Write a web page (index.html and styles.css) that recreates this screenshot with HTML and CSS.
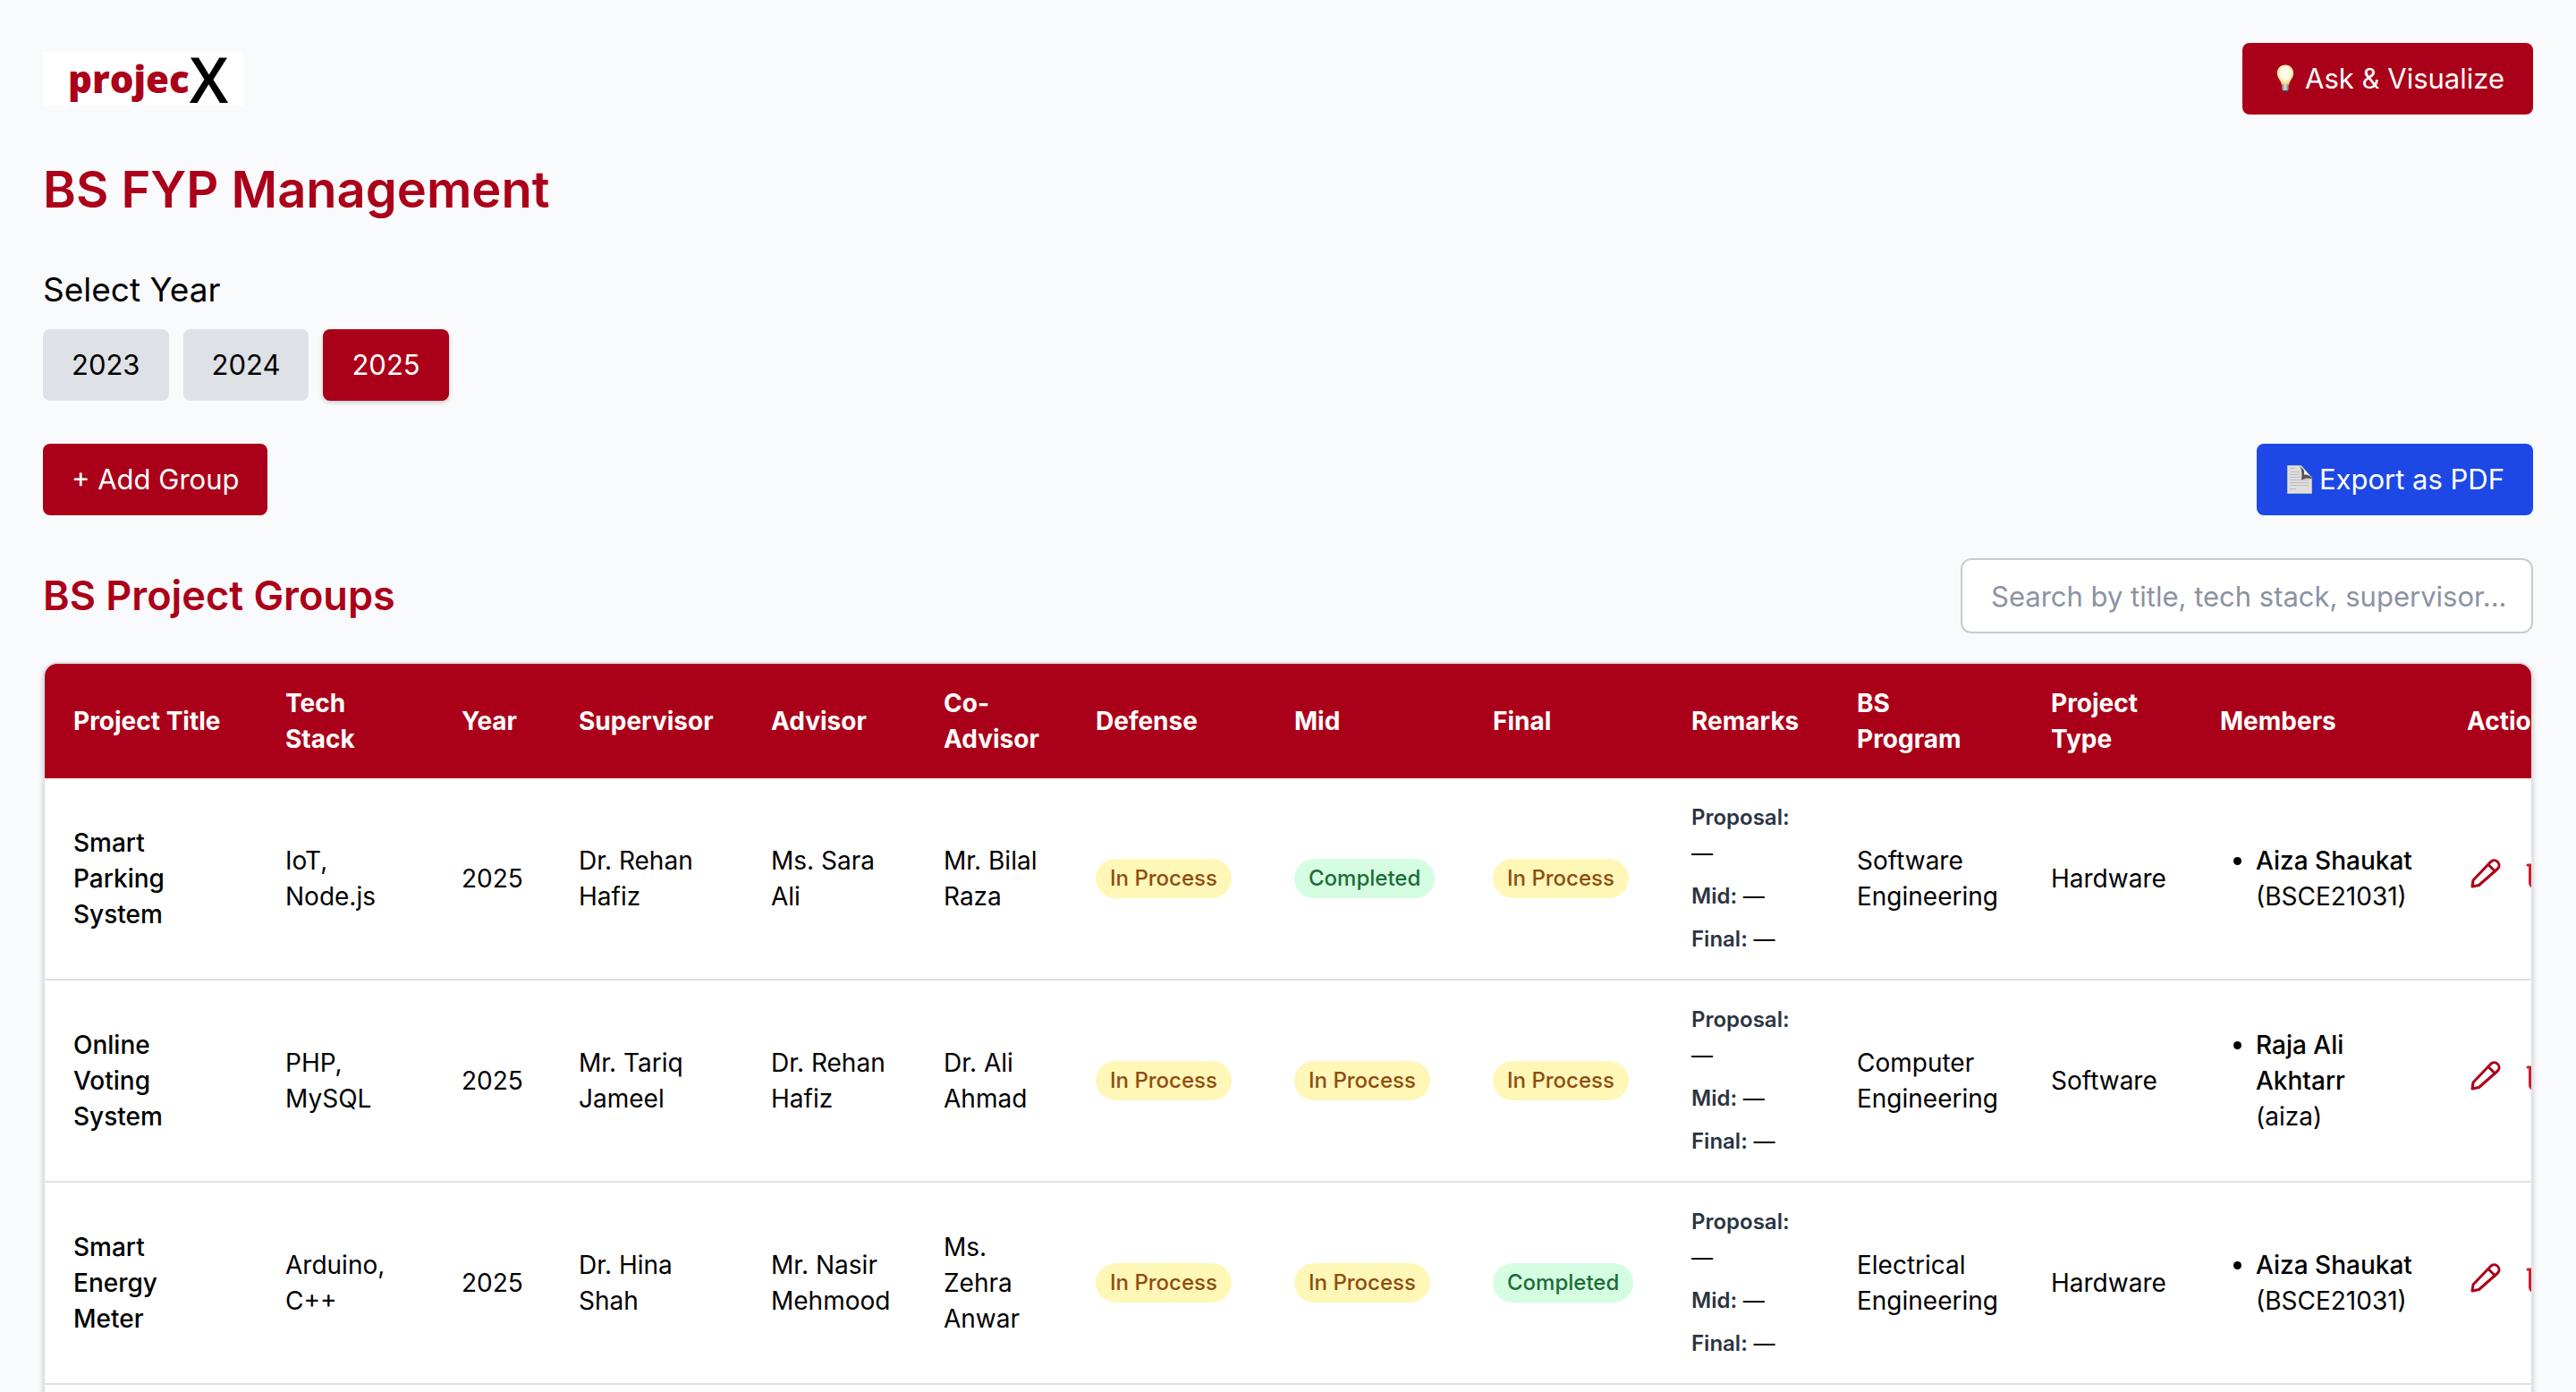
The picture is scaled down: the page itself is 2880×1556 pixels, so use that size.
FILE: index.html
```html
<!DOCTYPE html>
<html lang="en">
<head>
<meta charset="utf-8">
<title>BS FYP Management</title>
<link rel="stylesheet" href="styles.css">
</head>
<body>
<svg class="sprite" aria-hidden="true">
  <symbol id="pencil" viewBox="0 0 34 34"><path d="M2 32l1-7L22.500 4.500a5.300 5.300 0 0 1 8 7.500L9.500 30.500z"/><path d="M20 7.500l7.500 7.500"/></symbol>
  <symbol id="trash" viewBox="0 0 34 34"><path d="M2 8h30M4.500 8v20a4 4 0 0 0 4 4h17a4 4 0 0 0 4-4V8M11 8V5a3 3 0 0 1 3-3h6a3 3 0 0 1 3 3v3"/></symbol>
</svg>
<main class="page">
  <header class="bar">
    <div class="logo"><span class="logo-word">projec</span><span class="logo-x">X</span></div>
    <button type="button" class="btn btn-red">
      <svg class="bulb" viewBox="0 0 20 32" aria-hidden="true">
        <defs><radialGradient id="glow" cx="50%" cy="42%" r="55%"><stop offset="0" stop-color="#fffef6"/><stop offset=".6" stop-color="#fdf6d8"/><stop offset="1" stop-color="#f0cf7c"/></radialGradient>
        <linearGradient id="cap" x1="0" x2="1"><stop offset="0" stop-color="#777"/><stop offset=".5" stop-color="#ddd"/><stop offset="1" stop-color="#666"/></linearGradient></defs>
        <path fill="url(#glow)" d="M10 0.500C4.500.500.800 4.500.800 9.500c0 5.500 4.200 8 5.200 13.500h8c1-5.500 5.200-8 5.200-13.500C19.200 4.500 15.500.500 10 .500z"/>
        <path fill="url(#cap)" d="M6 22.500h8v5l-2 2.500H8l-2-2.500z"/><path fill="#444" d="M8 29h4l-1 2.500H9z"/>
      </svg>Ask &amp; Visualize</button>
  </header>

  <h1>BS FYP Management</h1>

  <section class="years">
    <h2 class="label">Select Year</h2>
    <div class="year-list">
      <button type="button" class="btn btn-gray">2023</button>
      <button type="button" class="btn btn-gray">2024</button>
      <button type="button" class="btn btn-red active">2025</button>
    </div>
  </section>

  <div class="bar">
    <button type="button" class="btn btn-red">+ Add Group</button>
    <button type="button" class="btn btn-blue">
      <svg class="doc" viewBox="0 0 28 32" aria-hidden="true">
        <path fill="#dedede" stroke="#bbb" d="M.500.500h15L27.500 14v17.500H.500z"/>
        <path stroke="#bcbcbc" stroke-width="1" d="M3 3.500h6M3 7.500h11M3 10.500h11M3 13.500h12M3 16.500h21M3 19.500h21M3 22.500h21M3 26.500h7"/>
        <path fill="#555" d="M13.500.500c3 3.500 3.500 9 2.500 16 4-2 8-2.500 11.500-1V14z"/>
        <path fill="#f6f6f6" d="M15.500.500c3 2 4 5.500 3.500 10 3-.500 6 .500 8.500 3.500z"/>
      </svg>Export as PDF</button>
  </div>

  <div class="bar list-head">
    <h2 class="title">BS Project Groups</h2>
    <input class="search" type="text" aria-label="Search groups" placeholder="Search by title, tech stack, supervisor...">
  </div>

  <div class="table-wrap">
    <table>
      <colgroup><col class="w-title"><col class="w-stack"><col class="w-year"><col class="w-super"><col class="w-advisor"><col class="w-co"><col class="w-stage"><col class="w-stage"><col class="w-stage"><col class="w-remarks"><col class="w-program"><col class="w-type"><col class="w-members"><col class="w-actions"></colgroup>
      <thead>
        <tr><th>Project Title</th><th>Tech<br>Stack</th><th>Year</th><th>Supervisor</th><th>Advisor</th><th>Co-<br>Advisor</th><th>Defense</th><th>Mid</th><th>Final</th><th>Remarks</th><th>BS<br>Program</th><th>Project<br>Type</th><th>Members</th><th>Actions</th></tr>
      </thead>
      <tbody>
        <tr>
          <td class="name">Smart<br>Parking<br>System</td><td>IoT,<br>Node.js</td><td>2025</td><td>Dr. Rehan<br>Hafiz</td><td>Ms. Sara<br>Ali</td><td>Mr. Bilal<br>Raza</td>
          <td><span class="tag wait">In Process</span></td><td><span class="tag done">Completed</span></td><td><span class="tag wait">In Process</span></td>
          <td><div class="remarks"><p><b>Proposal:</b><br>—</p><p><b>Mid:</b> —</p><p><b>Final:</b> —</p></div></td>
          <td>Software<br>Engineering</td><td>Hardware</td>
          <td><ul><li><b>Aiza Shaukat</b><br>(BSCE21031)</li></ul></td>
          <td><div class="actions"><button type="button" aria-label="Edit"><svg><use href="#pencil"/></svg></button><button type="button" class="delete" aria-label="Delete"><svg><use href="#trash"/></svg></button></div></td>
        </tr>
        <tr>
          <td class="name">Online<br>Voting<br>System</td><td>PHP,<br>MySQL</td><td>2025</td><td>Mr. Tariq<br>Jameel</td><td>Dr. Rehan<br>Hafiz</td><td>Dr. Ali<br>Ahmad</td>
          <td><span class="tag wait">In Process</span></td><td><span class="tag wait">In Process</span></td><td><span class="tag wait">In Process</span></td>
          <td><div class="remarks"><p><b>Proposal:</b><br>—</p><p><b>Mid:</b> —</p><p><b>Final:</b> —</p></div></td>
          <td>Computer<br>Engineering</td><td>Software</td>
          <td><ul><li><b>Raja Ali<br>Akhtarr</b><br>(aiza)</li></ul></td>
          <td><div class="actions"><button type="button" aria-label="Edit"><svg><use href="#pencil"/></svg></button><button type="button" class="delete" aria-label="Delete"><svg><use href="#trash"/></svg></button></div></td>
        </tr>
        <tr>
          <td class="name">Smart<br>Energy<br>Meter</td><td>Arduino,<br>C++</td><td>2025</td><td>Dr. Hina<br>Shah</td><td>Mr. Nasir<br>Mehmood</td><td>Ms.<br>Zehra<br>Anwar</td>
          <td><span class="tag wait">In Process</span></td><td><span class="tag wait">In Process</span></td><td><span class="tag done">Completed</span></td>
          <td><div class="remarks"><p><b>Proposal:</b><br>—</p><p><b>Mid:</b> —</p><p><b>Final:</b> —</p></div></td>
          <td>Electrical<br>Engineering</td><td>Hardware</td>
          <td><ul><li><b>Aiza Shaukat</b><br>(BSCE21031)</li></ul></td>
          <td><div class="actions"><button type="button" aria-label="Edit"><svg><use href="#pencil"/></svg></button><button type="button" class="delete" aria-label="Delete"><svg><use href="#trash"/></svg></button></div></td>
        </tr>
      </tbody>
    </table>
  </div>
</main>
</body>
</html>
```
FILE: styles.css
```css
*{box-sizing:border-box;margin:0;padding:0}
body{background:#f9fafb;color:#000;font:400 31px/48px Inter,"Liberation Sans",sans-serif;overflow-x:hidden}
button,input{font:inherit}
.sprite{display:none}
.page{display:flex;flex-direction:column;gap:48px;padding:48px 48px 64px}
.bar{display:flex;justify-content:space-between;align-items:center}
.logo{display:flex;align-items:center;width:224px;height:60px;padding-left:28px;background:#fff;font-family:"Open Sans",sans-serif;line-height:60px}
.logo-word{color:#ab0019;font-size:42px;font-weight:800}
.logo-x{color:#000;font-size:70px;font-weight:600}
h1{color:#ab0019;font-size:56px;line-height:72px;font-weight:600}
.label{font-size:37px;line-height:56px;font-weight:400}
.years{display:flex;flex-direction:column;gap:16px}
.year-list{display:flex;gap:16px}
.btn{display:flex;align-items:center;height:80px;padding:0 32px;border:0;border-radius:8px;white-space:nowrap;cursor:pointer}
.btn-red{background:#ab0019;color:#fff}
.btn-gray{background:#dee1e6;color:#000}
.btn-blue{background:#1d48e6;color:#fff}
.active{box-shadow:0 2px 6px rgba(0,0,0,.1),0 2px 4px rgba(0,0,0,.1)}
.bulb{width:20px;height:32px;margin:0 12px 0 6px}
.doc{width:28px;height:32px;margin:0 8px 0 2px}
.list-head{margin-bottom:-16px}
.title{color:#ab0019;font-size:45px;line-height:64px;font-weight:600}
.search{width:640px;height:84px;padding:0 24px 0 32px;border:2px solid #c7cbd3;border-radius:12px;background:#fff;outline:0}
.search::placeholder{color:#8b93a1;opacity:1}
.table-wrap{overflow:hidden;padding-bottom:64px;border:2px solid #dee1e6;border-radius:16px;background:#fff;box-shadow:0 2px 6px rgba(0,0,0,.1),0 2px 4px rgba(0,0,0,.1)}
table{width:2911px;table-layout:fixed;border-collapse:collapse;font-size:28px;line-height:40px}
th{padding:24px 32px;background:#ab0019;color:#fff;font-weight:700;text-align:left;white-space:nowrap}
td{padding:24px 32px;vertical-align:middle;white-space:nowrap}
tbody tr{border-bottom:2px solid #dee1e6}
.w-title{width:237px}
.w-stack{width:197px}
.w-year{width:131px}
.w-super{width:215px}
.w-advisor{width:193px}
.w-co{width:170px}
.w-stage{width:222px}
.w-remarks{width:185px}
.w-program{width:217px}
.w-type{width:189px}
.w-members{width:276px}
.w-actions{width:235px}
.name{font-weight:500}
.tag{display:inline-block;padding:6px 16px;border-radius:22px;font-size:24px;line-height:32px;font-weight:500}
.wait{background:#fff7b8;color:#8f4d0e}
.done{background:#d5fde2;color:#1b6e35}
.remarks{display:flex;flex-direction:column;gap:8px;font-size:24px}
.remarks b{color:#2b3442;font-weight:600}
ul{padding-left:40px}
li b{font-weight:500}
.actions{display:flex;gap:20px;padding-bottom:12px}
.actions button{display:flex;padding:0 4px;border:0;background:none;color:#ab0019;cursor:pointer}
.actions svg{width:34px;height:34px;fill:none;stroke:currentColor;stroke-width:3;stroke-linecap:round;stroke-linejoin:round}
.actions .delete{color:#d01c2b}
```
